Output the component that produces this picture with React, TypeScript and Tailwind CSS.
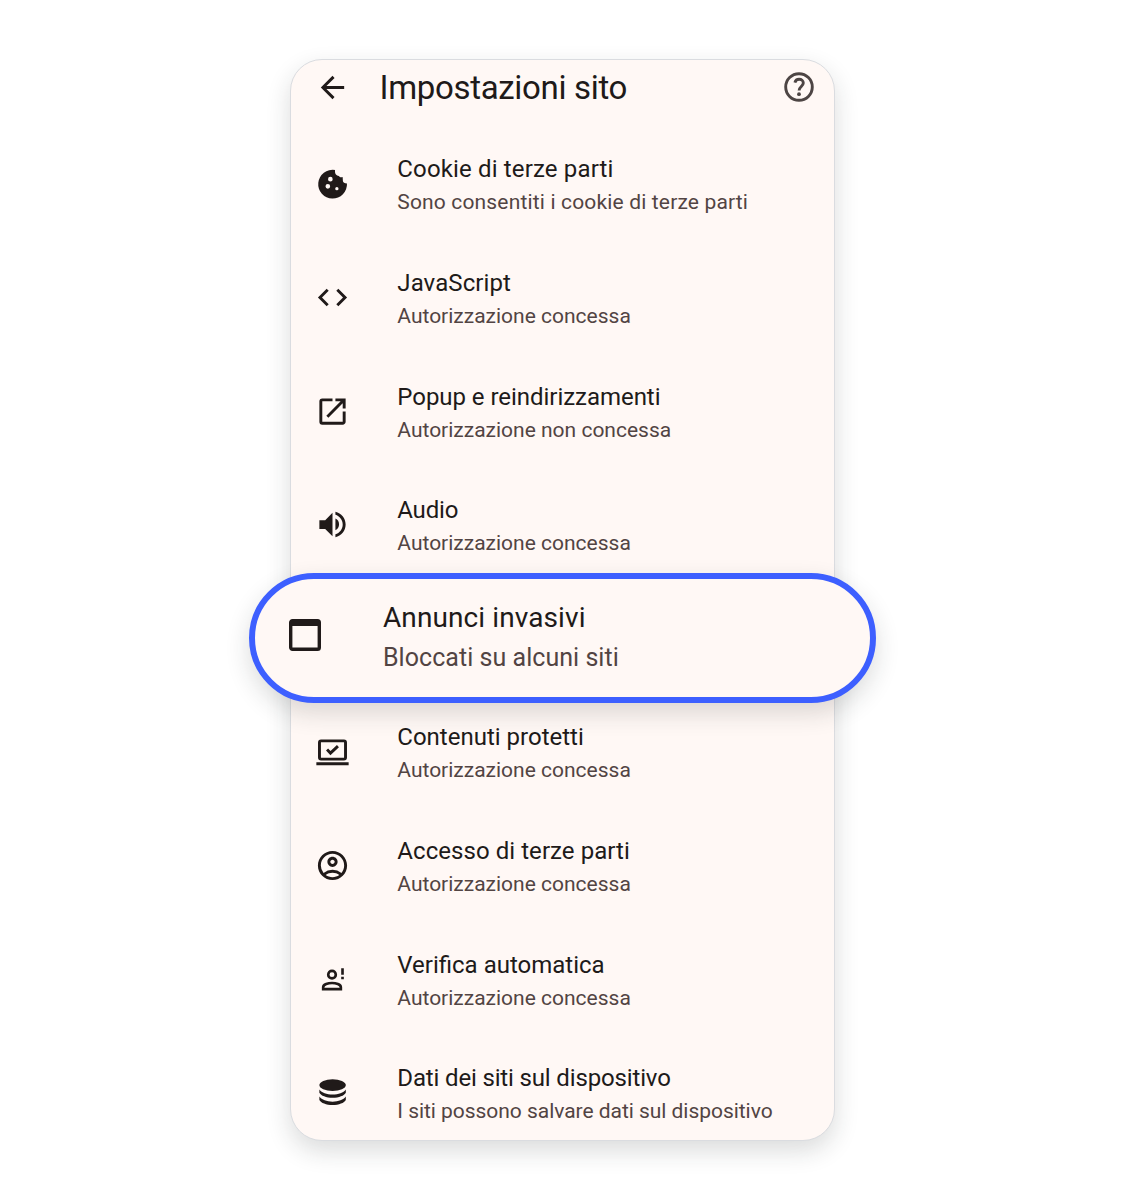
import React from "react";
import { MdArrowBack, MdCode, MdOpenInNew, MdOutlineAccountCircle, MdVolumeUp } from "react-icons/md";

function CookieIcon() {
  return (
    <svg viewBox="0 0 36 36" className="size-[35px]" fill="currentColor" fillRule="evenodd">
      <path d="M20.6 3.1A14.8 14.8 0 1 0 32.9 17C30.4 17 28.8 16 28.7 14.4 28.6 13 28.6 12 28.4 10.3 26.6 10.8 25.4 10.6 24.6 9.2 22.2 9 20.2 7.4 20.6 3.1ZM15.8 10.1a2.4 2.4 0 1 1 0 4.8a2.4 2.4 0 1 1 0-4.8ZM13.2 17.5a2.4 2.4 0 1 1 0 4.8a2.4 2.4 0 1 1 0-4.8ZM22.5 20.6a1.7 1.7 0 1 1 0 3.4a1.7 1.7 0 1 1 0-3.4Z" />
    </svg>
  );
}

function WindowIcon() {
  return (
    <svg viewBox="0 0 40 40" className="size-10" fill="none">
      <rect x="5.7" y="5.7" width="28.6" height="28.6" rx="1.8" stroke="currentColor" strokeWidth="3.4" />
      <path d="M6 6h28v5H6z" fill="currentColor" />
    </svg>
  );
}

function ProtectedIcon() {
  return (
    <svg viewBox="0 0 36 36" className="size-[35px]" fill="none" stroke="currentColor" strokeWidth="3">
      <rect x="4.6" y="6" width="26.8" height="18.8" rx="1.6" />
      <path d="m12.4 15 3.5 3.6 7.7-7.2M1.4 29.6h33.2" />
    </svg>
  );
}

function VerifyIcon() {
  return (
    <svg viewBox="0 0 36 36" className="size-[35px]" fill="none" stroke="currentColor" strokeWidth="2.7">
      <circle cx="17.5" cy="13" r="3.9" />
      <path d="M8.4 27.9v-2c0-2.8 5.2-4.3 9.1-4.3s9.1 1.5 9.1 4.3v2ZM28.3 6.3v6.9M28.3 15.1v2.6" />
    </svg>
  );
}

function StorageIcon() {
  return (
    <svg viewBox="0 0 36 36" className="size-[35px]" fill="currentColor">
      <ellipse cx="18.1" cy="10.4" rx="13.6" ry="6" />
      <path d="M4.5 14.9C7 18.2 12 20 18.1 20s11.1-1.8 13.6-5.1v3.4c-1.6 3-7 5.2-13.6 5.2s-12-2.2-13.6-5.2Z" />
      <path d="M4.5 22.2C7 25.5 12 27.4 18.1 27.4S29.2 25.5 31.7 22.2v3.5c-1.6 3-7 5.2-13.6 5.2s-12-2.2-13.6-5.2Z" />
    </svg>
  );
}

function HelpIcon() {
  return (
    <svg viewBox="0 0 36 36" className="size-9" fill="none" stroke="currentColor" strokeWidth="2.9">
      <circle cx="18" cy="18" r="13.3" />
      <path d="M13.9 13.6c.5-2 2.1-3.3 4.2-3.3 2.4 0 4.2 1.5 4.2 3.7 0 3.2-4.2 3.8-4.2 7.4" />
      <circle cx="18" cy="25.2" r="1.9" fill="currentColor" stroke="none" />
    </svg>
  );
}

type Item = {
  icon: React.ReactNode;
  title: string;
  subtitle: string;
  titleClass?: string;
  subtitleClass?: string;
};

const BEFORE: Item[] = [
  {
    icon: <CookieIcon />,
    title: "Cookie di terze parti",
    subtitle: "Sono consentiti i cookie di terze parti",
    titleClass: "tracking-[0.15px]",
    subtitleClass: "tracking-[0.16px]",
  },
  { icon: <MdCode className="size-[35px]" />, title: "JavaScript", subtitle: "Autorizzazione concessa", titleClass: "tracking-[0.1px]" },
  { icon: <MdOpenInNew className="size-[35px]" />, title: "Popup e reindirizzamenti", subtitle: "Autorizzazione non concessa", titleClass: "tracking-[-0.04px]" },
  { icon: <MdVolumeUp className="size-[35px]" />, title: "Audio", subtitle: "Autorizzazione concessa", titleClass: "tracking-[-0.2px]" },
];

const AFTER: Item[] = [
  { icon: <ProtectedIcon />, title: "Contenuti protetti", subtitle: "Autorizzazione concessa" },
  { icon: <MdOutlineAccountCircle className="size-[35px]" />, title: "Accesso di terze parti", subtitle: "Autorizzazione concessa", titleClass: "tracking-[0.06px]" },
  { icon: <VerifyIcon />, title: "Verifica automatica", subtitle: "Autorizzazione concessa" },
  {
    icon: <StorageIcon />,
    title: "Dati dei siti sul dispositivo",
    subtitle: "I siti possono salvare dati sul dispositivo",
    titleClass: "tracking-[-0.15px]",
    subtitleClass: "tracking-[-0.04px]",
  },
];

function Row({ icon, title, subtitle, titleClass = "", subtitleClass = "" }: Item) {
  return (
    <li className="flex h-[113.6px] shrink-0 items-center pl-[24px]">
      <span className="shrink-0">{icon}</span>
      <div className="ml-[47.3px] whitespace-nowrap pt-[4.4px]">
        <p className={`text-[24px] leading-[33px] ${titleClass}`}>{title}</p>
        <p className={`text-[21px] leading-[33px] text-[#524443] ${subtitleClass}`}>{subtitle}</p>
      </div>
    </li>
  );
}

export default function App() {
  return (
    <main className="flex h-[1200px] justify-center bg-white pt-[59px] font-['Roboto',sans-serif] text-[#201a19]">
      <div className="h-[1082px] w-[545px] rounded-[32px] border border-[#dadce0] bg-[#fff8f5] shadow-[0_10px_24px_rgba(32,38,36,0.16)]">
        <header className="flex h-[54px] items-center pl-[24px] pr-[17px]">
          <MdArrowBack className="size-[35px]" />
          <h1 className="ml-[29.5px] flex-1 pt-[2px] text-[33px] leading-[40px] tracking-[-0.32px]">Impostazioni sito</h1>
          <span className="text-[#4d4544]"><HelpIcon /></span>
        </header>

        <ul className="flex flex-col pt-[13.4px]">
          {BEFORE.map((item) => <Row key={item.title} {...item} />)}

          {/* Highlighted row, wider than the card */}
          <li className="relative z-10 -mx-[42px] -mb-[7.6px] -mt-[8.8px] flex h-[130px] shrink-0 items-center rounded-full border-[6px] border-[#3d5fff] bg-[#fff8f5] pl-[30px] shadow-[0_10px_24px_rgba(32,38,36,0.16)]">
            <span className="-mt-[6px] shrink-0"><WindowIcon /></span>
            <div className="ml-[58px] whitespace-nowrap leading-[40px]">
              <p className="text-[28px] tracking-[0.1px]">Annunci invasivi</p>
              <p className="text-[25px] tracking-[0.04px] text-[#524443]">Bloccati su alcuni siti</p>
            </div>
          </li>

          {AFTER.map((item) => <Row key={item.title} {...item} />)}
        </ul>
      </div>
    </main>
  );
}
